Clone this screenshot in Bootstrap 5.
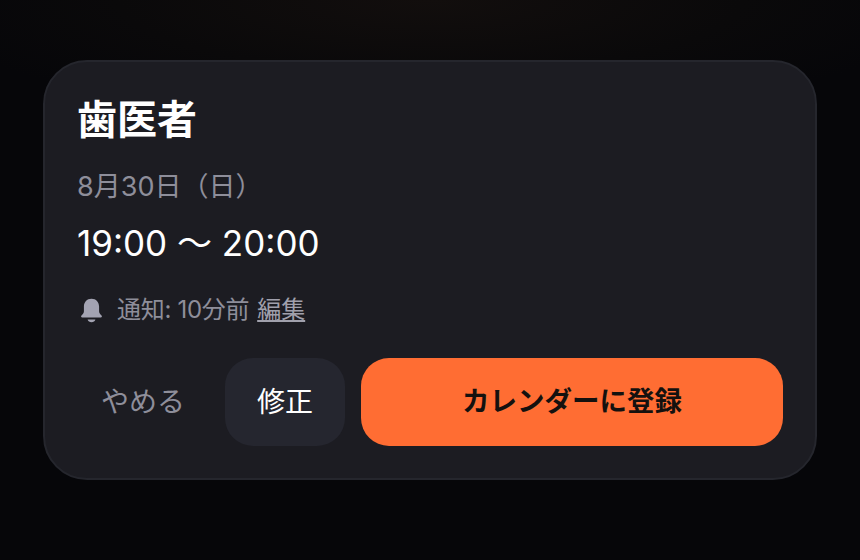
<!DOCTYPE html>
<html lang="ja">
<head>
<meta charset="utf-8">
<link href="https://cdn.jsdelivr.net/npm/bootstrap@5.3.0/dist/css/bootstrap.min.css" rel="stylesheet">
<style>
html,body{height:100%;}
body{background:radial-gradient(ellipse 520px 120px at 50% 0,#120e0d 0%,#0a090a 60%,#060609 100%),#060609;background-color:#060609;font-family:Inter,"Noto Sans CJK JP",sans-serif;overflow:hidden;}
.sheet{margin:60px 43px 0;width:774px;height:420px;background:#1c1c22;border:2px solid #25262d;border-radius:44px;padding:31px 32px 32px 32px;}
.ttl{font-size:40px;line-height:54px;font-weight:700;color:#fff;margin:0;}
.dt{font-size:27px;line-height:36px;color:#8e8e9a;margin-top:22px;}
.tm{font-size:35px;line-height:48px;color:#fff;margin-top:14px;}
.nt{font-size:24px;line-height:32px;color:#8e8e9a;margin-top:27px;letter-spacing:-.3px;}
.nt a{color:#a0a0ac;letter-spacing:0;}
.bell{width:29px;height:29px;margin-right:11px;flex:none;}
.acts{margin-top:32px;height:88px;}
.b-x{width:132px;height:88px;border:0;background:transparent;color:#8e8e9a;font-size:28px;padding:0;}
.b-e{width:120px;height:88px;border:0;background:#25262f;color:#fff;font-size:28px;border-radius:28px;padding:0;}
.b-s{flex:1;height:88px;border:0;background:#ff6d33;color:#14110f;font-size:27.500px;font-weight:700;border-radius:28px;padding:0;}
</style>
</head>
<body>
<div class="sheet">
  <h1 class="ttl">歯医者</h1>
  <div class="dt">8月30日（日）</div>
  <div class="tm">19:00 〜 20:00</div>
  <div class="nt d-flex align-items-center">
    <svg class="bell" viewBox="0 0 26 26"><path fill="#a3a3b2" d="M13 2.500c-4.200 0-6.800 3-6.800 7v4.200c0 1.400-.9 2.600-2.200 3.800-.7.700-.3 1.700.7 1.700h16.600c1 0 1.400-1 .7-1.700-1.300-1.200-2.200-2.400-2.200-3.800V9.500c0-4-2.600-7-6.800-7z"/><path fill="#a3a3b2" d="M9.500 21h7c-.4 1.600-1.800 2.500-3.500 2.500S9.900 22.600 9.500 21z"/></svg>
    <span>通知: 10分前</span><a href="#" class="ms-2">編集</a>
  </div>
  <div class="acts d-flex gap-3">
    <button class="b-x">やめる</button>
    <button class="b-e">修正</button>
    <button class="b-s">カレンダーに登録</button>
  </div>
</div>
<script src="https://cdn.jsdelivr.net/npm/bootstrap@5.3.0/dist/js/bootstrap.bundle.min.js"></script>
</body>
</html>
